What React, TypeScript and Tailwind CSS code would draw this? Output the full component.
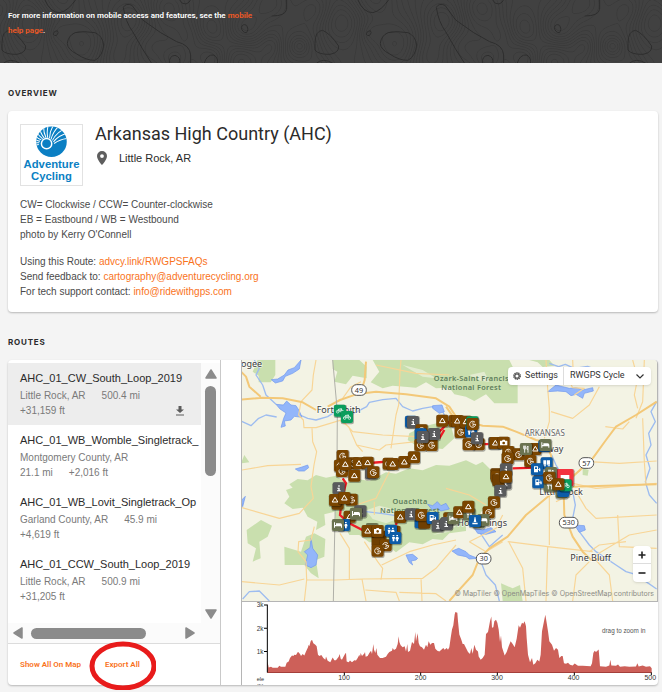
import React from 'react';

type MarkerKind =
  | 'warn' | 'turn' | 'info' | 'blue' | 'people' | 'pump' | 'book'
  | 'bed' | 'fork' | 'camera' | 'bike' | 'monument' | 'plain' | 'finish';

const FILL: Record<MarkerKind, string> = {
  warn: '#7a4500', turn: '#7a4500', camera: '#7a4500', plain: '#6f3f02',
  info: '#595a5c', blue: '#0c5ca8', people: '#0c5ca8', pump: '#0c5ca8',
  book: '#0c5ca8', monument: '#0c5ca8', bed: '#6b7350', fork: '#6b7350',
  bike: '#0a9d5c', finish: '#f4333f',
};

function Glyph({ kind }: { kind: MarkerKind }) {
  const line = { fill: 'none', stroke: '#fff', strokeWidth: 2.6 };
  switch (kind) {
    case 'warn':
      return <path d="M0-8 8.500 6H-8.500Z" {...line} strokeWidth={3} strokeLinejoin="round" />;
    case 'turn':
      return <path d="M7-5A9 9 0 1 0 9 1H1M1 1V6M-3-3H3" {...line} />;
    case 'info':
      return <path d="M-1-9H3V-5H-1ZM-4-2H3V6H6V9H-5V6H-1V1H-4Z" fill="#fff" />;
    case 'people':
      return <path d="M-8-9h5v4h-5zM3-9h5v4h-5zM-10-3h9l-1 6h-1v7h-5v-7h-1zM2-3h7l2 7h-3v6h-5v-6h-3z" fill="#fff" />;
    case 'pump':
      return <path d="M-9-9H3V9H-9ZM-6-6V-1H0V-6ZM5-6l5 4V6H6V2H3V0h4z" fill="#fff" fillRule="evenodd" />;
    case 'book':
      return <path d="M-10-9h9v13h-9zM1-9h9v13H1zM-9 6h7v3h-7zM3 6h7v3H3z" fill="#fff" />;
    case 'bed':
      return <path d="M-12-8h3v8h3v-5h13q5 1 5 5v8h-3V4H-9v4h-3z" fill="#fff" />;
    case 'fork':
      return <path d="M-7-10v8q0 3 3 3t3-3v-8M-4-10V11M6 11V-9q-4 2-3 10h3" {...line} />;
    case 'camera':
      return <path d="M-11-6h6l2-3h6l2 3h6V8h-22zM0-3a4 4 0 1 0 .1 0z" fill="#fff" fillRule="evenodd" />;
    case 'bike':
      return <path d="M-11 3a4 4 0 1 0 8 0a4 4 0 1 0-8 0M3 3a4 4 0 1 0 8 0a4 4 0 1 0-8 0M-7 3-4-5H4L0 3-4-5M3-8 7 3" {...line} strokeWidth={2} />;
    case 'monument':
      return <path d="M-1-12H1L4 3H-4ZM-8 5H8V10H-8Z" fill="#fff" />;
    case 'finish':
      return <path d="M-13-8H13V9H3V16H-2V9H-13Z" fill="#fff" />;
    default:
      return null;
  }
}

const MARKERS: [MarkerKind, number, number][] = [
  ['bike', 312, 167], ['bike', 333, 186],
  ['blue', 525, 200], ['info', 531, 201],
  ['turn', 557, 226], ['blue', 554, 238], ['blue', 563, 250], ['turn', 553, 270], ['turn', 587, 270],
  ['info', 594, 237], ['info', 560, 246],
  ['warn', 619, 197], ['warn', 656, 198], ['warn', 664, 198], ['turn', 674, 231], ['warn', 690, 200],
  ['people', 705, 229], ['bike', 709, 202], ['turn', 710, 207], ['turn', 728, 268], ['turn', 698, 268], ['info', 723, 250],
  ['info', 775, 264], ['warn', 778, 264], ['camera', 803, 263],
  ['turn', 817, 291], ['turn', 848, 298], ['warn', 898, 282], ['turn', 815, 310], ['fork', 870, 282],
  ['blue', 925, 273], ['bed', 928, 270], ['turn', 883, 318], ['book', 932, 325],
  ['plain', 781, 358], ['turn', 783, 365], ['info', 810, 343], ['info', 808, 385], ['plain', 787, 376], ['warn', 810, 365],
  ['info', 793, 407], ['turn', 774, 442], ['turn', 758, 472],
  ['finish', 987, 368], ['info', 912, 374], ['pump', 903, 343], ['pump', 907, 382], ['fork', 945, 354],
  ['bed', 977, 412], ['blue', 982, 408], ['bike', 989, 391], ['fork', 941, 392], ['turn', 940, 368], ['warn', 967, 388],
  ['turn', 320, 303], ['turn', 312, 332], ['turn', 318, 348], ['turn', 352, 325], ['warn', 328, 328],
  ['warn', 369, 325], ['warn', 395, 323], ['turn', 458, 326], ['warn', 470, 327], ['warn', 505, 321],
  ['warn', 534, 307], ['warn', 355, 362], ['info', 405, 355], ['turn', 412, 352],
  ['info', 308, 400], ['plain', 305, 446], ['warn', 297, 435], ['turn', 347, 434], ['warn', 325, 429],
  ['warn', 341, 485], ['info', 373, 469], ['bed', 360, 476], ['people', 324, 510], ['bed', 306, 510],
  ['bed', 408, 522], ['plain', 433, 545], ['plain', 425, 558], ['turn', 475, 530], ['people', 465, 527],
  ['warn', 395, 528], ['camera', 425, 528], ['turn', 449, 571], ['turn', 425, 587], ['people', 478, 549],
  ['blue', 554, 502], ['plain', 565, 503], ['warn', 493, 486], ['info', 525, 478], ['turn', 556, 480],
  ['pump', 590, 489], ['info', 605, 512], ['turn', 640, 490], ['info', 632, 504], ['info', 630, 507],
  ['bed', 652, 490], ['warn', 670, 472], ['fork', 700, 478], ['warn', 697, 455],
  ['bed', 728, 502], ['bed', 742, 495], ['monument', 717, 498],
];

function Shield({ x, y, label }: { x: number; y: number; label: string }) {
  const half = label.length > 2 ? 28 : 22;
  return (
    <g>
      <rect x={x - half} y={y - 16} width={half * 2} height={32} rx={15} fill="#fff" stroke="#555" strokeWidth={3} />
      <text x={x} y={y + 8} textAnchor="middle" fontSize={22} fill="#333">{label}</text>
    </g>
  );
}

function RouteMap() {
  return (
    <svg
      viewBox="15 15 1251 723"
      preserveAspectRatio="xMidYMid slice"
      className="block h-full w-full font-['Noto_Sans',sans-serif]"
      role="img"
      aria-label="Map of the Arkansas High Country route"
    >
      <rect x="0" y="0" width="1300" height="760" fill="#f3f3e4" />
      <g fill="#c9dfae">
        <path d="M65 15H118V60L104 82H68V62L50 50Z" />
        <path d="M290 15H370L392 35V70L350 62L330 88L295 80L304 50L290 42Z" />
        <path d="M410 15H820L845 65V145H775L750 118L715 138L690 125L655 118L640 98L600 100L570 82L540 98L470 92L440 100L404 82L430 50Z" />
        <path d="M880 15H940L955 32L920 36L905 22Z" />
        <path d="M520 235L560 215L640 195L655 250L620 282L545 275L515 255Z" />
        <path d="M150 405L170 398L160 388L185 372L215 376L240 360L270 368L300 362L330 384L365 372L400 378L450 352L480 356L520 340L560 346L600 330L640 332L690 316L720 330L740 320L765 345L785 350L780 380L790 410L770 430L760 460L735 470L730 492L690 510L690 528L640 535L620 555L590 552L560 568L520 562L480 592L440 560L400 562L370 540L340 540L320 500L298 492L296 470L265 478L268 510L240 525L244 500L215 485L200 458L170 462L145 445L160 425Z" />
        <path d="M15 325L25 300L40 322ZM32 525L75 495L108 512L95 545L70 560L74 610L50 620L60 580L35 565Z" />
        <path d="M145 575L195 590L210 545L235 535L268 552L265 605L240 615L248 670L225 655L205 630L146 630Z" />
        <path d="M795 685L830 700L852 690L860 738H800ZM1040 340L1058 345L1055 362L1040 360Z" />
      </g>
      <g fill="#e3ecd0">
        <path d="M390 466L430 452L470 462L490 490L450 505L410 492ZM590 540L640 520L620 500L670 505L640 530Z" />
        <path d="M500 30L560 45L600 70L560 65ZM700 60L745 50L760 80L735 78Z" />
      </g>
      <g fill="none" stroke="#9dbcf0" strokeWidth="4" strokeLinejoin="round">
        <path d="M15 198L45 212L68 190L90 180L122 186M192 180L215 190L240 195L275 185L306 165L330 158L352 176L392 155L400 142L440 134L480 130L500 155L530 168L560 160L590 155L618 165L632 195" />
        <path d="M55 15L70 40L60 60L80 90L90 120L120 148" />
        <path d="M1262 140L1245 170L1258 200L1238 235L1245 270L1230 300L1242 340L1228 380L1240 420L1262 445" />
        <path d="M940 25L968 35L988 28L1015 40L1055 34L1090 48L1130 42M947 300L960 330L990 380L1010 410L1018 450L1010 490L1030 530L1060 570L1080 590L1110 610L1140 630L1170 650L1205 660L1230 680L1262 702" />
        <path d="M730 530L760 575L800 540M735 620L750 660L778 690L790 738M20 732L40 710L70 708L100 738M390 470L440 476L480 482" />
      </g>
      <g fill="#93b6fa" stroke="#6e97ee" strokeWidth="2">
        <path d="M195 15L175 38L156 45L145 60L125 72L106 74L118 84L140 78L148 64L170 55L190 42Z" />
        <path d="M120 148L142 150L152 138L165 150L180 152L190 168L198 187L175 184L165 195L145 198L148 213L135 217L143 190L150 174L132 162Z" />
        <path d="M178 342L198 336L215 330L218 338L205 348L188 348Z" />
        <path d="M225 550L230 580L245 600L240 630L225 638L208 630L215 600L205 590L222 578Z" />
        <path d="M510 600L530 598L545 610L540 615L525 618L530 630L520 622Z" />
        <path d="M935 110L960 90L980 95L1000 100L1020 98L1040 105L1070 98L1072 108L1045 115L1040 130L1020 118L1005 122L990 110L965 108Z" />
        <path d="M648 588L668 580L690 590L700 600L725 610L700 612L690 605L665 600Z" />
        <path d="M575 448L590 452L604 440L615 452L630 445L640 462L615 468L600 460L590 466ZM715 520L740 525L765 518L780 530L750 538L725 535Z" />
        <path d="M1016 510L1045 512L1048 525L1030 532ZM15 437L28 424L20 455ZM590 152L618 150L625 170L610 175L590 160Z" />
      </g>
      <g fill="none" stroke="#f8d596" strokeWidth="3.5" strokeLinejoin="round">
        <path d="M240 15L232 60L228 105L195 140L188 180L202 195L204 218L240 218L312 196L338 215L362 270L380 290M316 192L350 230L440 240L540 245M362 270L430 285L450 270L540 260" />
        <path d="M18 345L95 332L195 328M228 220L230 260L242 290L234 330L225 395L232 430L190 475L130 490L18 458M495 15L492 50L488 150L480 180L465 280" />
        <path d="M375 80L345 95L320 130M420 30L540 55L640 60" />
        <path d="M235 515L225 555L188 560L186 590L210 620L212 675L205 738M212 675L300 675L378 672L560 670L600 640L660 570M205 672L130 690L18 680M312 535L340 580L340 672M385 560L425 620L440 640L435 675M378 672L390 738M388 705L480 712L490 738M555 670L558 738M490 712L600 716L630 738" />
        <path d="M437 630L520 590L590 570L660 555" />
        <path d="M930 15L935 100L940 160L940 200L925 250M1015 120L1045 100L1010 98L995 70L1012 60L1010 15M945 170L1010 190L1060 150L1090 95M1190 15L1205 70L1195 120L1205 160M1108 215L1160 222L1180 200" />
        <path d="M1225 15L1220 140L1200 190M1060 320L1150 325L1262 318M1035 345L980 380M1220 190L1225 320L1230 390" />
        <path d="M950 372L1080 400L1262 385M960 440L1020 410L1050 460L1080 490L1262 480M1145 480L1150 575L1262 580M815 560L935 575L1070 590M935 575L930 738M940 420L940 570M818 560L860 640L870 738" />
        <path d="M1060 620L1020 660L1010 738M1075 610L1120 660L1130 738M1080 600L1180 540L1262 525M1060 590L1090 570L1170 560M700 560L740 540L780 520L800 480M700 560L750 590L800 560" />
        <path d="M630 400L700 420L750 450M460 350L440 390L420 430L360 450M415 440L415 480" />
      </g>
      <g fill="none" stroke="#f3c878" strokeWidth="6" strokeLinejoin="round">
        <path d="M15 134L80 128L140 130L200 142L240 165M15 50L30 65L40 95L74 125M275 155L312 135L360 118L420 110L510 118L600 130L640 155L660 185" />
        <path d="M390 20L386 75L375 110M630 155L655 190L740 212L800 215L840 230L900 255L925 260L945 300L950 350L960 390" />
        <path d="M1262 140L1200 180L1140 215L1110 255L1070 310L1010 365L985 385L930 430L870 480L815 545L760 580L730 610L710 660L660 715L640 738" />
        <path d="M983 415L985 480L1010 545L1040 590L1066 615M1070 615L1100 610M1010 395L1262 388" />
      </g>
      <path d="M290 15L304 170L303 330M298 440L292 738" stroke="#b0b0a8" strokeWidth="3" fill="none" />
      <g fontSize="27" fill="#3a3a3a" stroke="#fff" strokeWidth="4" strokeOpacity=".7" paintOrder="stroke">
        <text x="15" y="36">ogee</text>
        <text x="242" y="174">Fort Smith</text>
        <text x="882" y="292">Conway</text>
        <text x="910" y="421">Little Rock</text>
        <text x="664" y="514">Hot Springs</text>
        <text x="1003" y="619">Pine Bluff</text>
        <text x="866" y="243" fontSize="24" fill="#666">ARKANSAS</text>
      </g>
      <g fontSize="22" fontWeight="600" letterSpacing="1" fill="#5d7d5b" textAnchor="middle">
        <text x="706" y="77">Ozark-Saint Francis</text>
        <text x="706" y="104">National Forest</text>
        <text x="522" y="447">Ouachita</text>
        <text x="522" y="473">National Forest</text>
      </g>
      <path d="M320 320L400 324L530 314M320 370L330 385L318 430L312 480L340 505L385 528M480 510L485 490M600 240L640 200M730 268L810 265M830 340L900 338M610 250L625 225" stroke="#ee1c25" strokeWidth="7" fill="none" />
      <Shield x={369} y={105} label="49" />
      <Shield x={1051} y={324} label="57" />
      <Shield x={998} y={503} label="530" />
      <Shield x={743} y={611} label="30" />
      {MARKERS.map(([kind, x, y], i) => {
        const half = kind === 'finish' ? 26 : 18;
        return (
          <g key={i} transform={`translate(${x} ${y})`}>
            <rect x={-half - 1} y={-half} width={half * 2 + 4} height={half * 2 + 4} rx={7} fill="#000" opacity=".3" />
            <rect x={-half} y={-half} width={half * 2} height={half * 2} rx={6} fill={FILL[kind]} />
            <Glyph kind={kind} />
          </g>
        );
      })}
    </svg>
  );
}

const PROFILE =
  '94,233 94,200 97,212 98,218 105,216 110,219 125,219 130,213 135,216 148,216 152,204 158,200 162,190 168,182 172,184 175,180 180,181 186,171 192,178 195,184 200,178 205,182 210,170 216,158 218,150 220,155 224,140 228,135 232,146 238,150 242,155 246,180 250,184 256,181 262,190 268,195 270,185 275,198 283,202 290,188 295,196 300,196 308,186 311,178 314,192 318,195 322,187 327,178 330,174 332,200 338,202 342,197 348,202 355,196 360,197 365,190 370,180 372,186 374,175 378,184 385,176 387,172 389,186 395,184 400,175 405,168 408,178 412,148 414,165 418,175 421,160 424,180 432,190 440,190 450,186 455,178 460,172 468,168 470,160 474,166 480,162 485,148 488,125 490,142 494,152 500,158 506,155 510,170 514,148 516,172 522,168 528,142 534,148 538,112 540,140 545,116 548,145 552,155 558,158 564,165 570,150 574,158 578,140 583,150 588,145 594,145 598,162 604,168 610,170 616,165 622,160 626,165 632,160 636,165 640,158 644,130 648,105 652,92 656,60 658,53 664,55 666,80 670,120 676,135 680,148 684,148 690,160 696,172 702,178 706,160 710,177 715,150 720,165 726,170 728,185 734,195 740,190 746,180 750,118 756,112 762,80 766,66 768,100 772,98 775,80 780,76 784,85 788,105 792,142 795,123 798,158 806,182 812,172 818,155 824,140 830,148 836,158 842,132 848,92 852,100 858,85 862,88 866,80 870,95 872,130 876,180 882,202 888,190 892,210 898,205 904,195 910,200 914,180 918,110 924,80 928,61 932,85 936,110 940,140 948,150 954,168 960,160 966,165 970,190 976,184 980,184 984,205 990,207 996,204 1002,210 1010,212 1016,206 1026,213 1040,213 1064,214 1068,205 1072,175 1076,168 1080,172 1084,168 1088,164 1092,214 1110,216 1120,212 1123,195 1126,212 1140,213 1146,209 1152,216 1166,214 1180,216 1200,215 1204,205 1208,215 1220,212 1230,216 1242,214 1247,220 1247,233';

function ElevationChart() {
  return (
    <svg
      viewBox="18 23 1248 247"
      preserveAspectRatio="none"
      className="block h-full w-full font-['Liberation_Sans',Arial,sans-serif]"
      role="img"
      aria-label="Elevation profile"
    >
      <polygon points={PROFILE} fill="#cd6059" />
      <path d="M94 233H1247" stroke="#a43f3a" strokeWidth="3" />
      <path d="M84 32H94V233M84 101H94M84 170H94M325 233V241M554 233V241M784 233V241M1015 233V241M1246 233V241" stroke="#000" strokeWidth="3" fill="none" />
      <g fontSize="19" fill="#333">
        <text x="62" y="39">3k</text>
        <text x="62" y="108">2k</text>
        <text x="62" y="177">1k</text>
        <text x="62" y="259" fontSize="17">ele</text>
        <text x="62" y="280" fontSize="17">(ft)</text>
      </g>
      <g fontSize="21" fill="#333" textAnchor="middle">
        <text x="324" y="255">100</text>
        <text x="554" y="255">200</text>
        <text x="783" y="255">300</text>
        <text x="1013" y="255">400</text>
        <text x="1243" y="255">500</text>
      </g>
      <text x="1098" y="114" fontSize="19" fill="#555">drag to zoom in</text>
    </svg>
  );
}

/* Contour lines of a small height field that repeats horizontally. */
const TILE = 313;
const PEAKS: [number, number, number, number][] = [
  [84, 45, 20, 1], [56, 33, 8, 0.4], [60, -4, 18, 0.9], [130, 22, 15, -0.8], [168, 8, 15, 0.9],
  [175, 60, 10, 0.7], [211, 58, 12, 0.8], [210, 30, 13, -0.6], [245, 28, 14, 0.9], [270, 2, 15, 0.9],
  [298, 47, 16, 1], [300, 46, 5, 0.3], [315, 10, 13, 0.7], [28, 20, 16, -0.7], [115, 55, 14, -0.6],
  [240, 60, 14, -0.7], [150, 45, 14, 0.5], [190, 35, 12, 0.6], [272, 46, 9, -0.5], [8, 70, 10, 0.5],
];

function buildContours() {
  const height = (x: number, y: number) => {
    let sum = 0;
    for (const [px, py, r, h] of PEAKS) {
      let dx = Math.abs(x - px);
      dx = Math.min(dx, TILE - dx);
      sum += h * Math.exp(-(dx * dx + (y - py) * (y - py)) / (2 * r * r));
    }
    return sum;
  };
  const step = 2;
  let d = '';
  for (let x = 0; x < TILE; x += step) {
    for (let y = 0; y < 64; y += step) {
      const c = [[x, y], [x + step, y], [x + step, y + step], [x, y + step]];
      const v = c.map(([a, b]) => height(a, b));
      for (let level = -0.85; level < 1.3; level += 0.13) {
        const hits: string[] = [];
        for (let k = 0; k < 4; k++) {
          const n = (k + 1) % 4;
          if (v[k] < level !== v[n] < level) {
            const t = (level - v[k]) / (v[n] - v[k]);
            hits.push(`${(c[k][0] + t * (c[n][0] - c[k][0])).toFixed(1)} ${(c[k][1] + t * (c[n][1] - c[k][1])).toFixed(1)}`);
          }
        }
        if (hits.length >= 2) d += `M${hits[0]}L${hits[1]}`;
      }
    }
  }
  return d;
}

const CONTOURS = buildContours();

function Topography() {
  return (
    <svg className="absolute inset-0 h-full w-full" aria-hidden="true">
      <defs>
        <pattern id="topo" width={TILE} height="64" patternUnits="userSpaceOnUse">
          <path d={CONTOURS} fill="none" stroke="#3a3a3a" strokeWidth="1" />
          <g transform="scale(.33333)" fill="none" stroke="#2c2c2c" strokeWidth="3">
            <path d="M202 130Q204 108 225 98Q250 92 285 98Q308 108 311 135Q308 168 285 181Q260 182 230 162Q202 148 202 130Z" />
            <path d="M160 102Q162 92 172 92Q178 98 170 106Q162 110 160 102Z" />
            <path d="M370 22Q378 8 396 16L428 60L482 98L530 125Q570 135 572 165V192M370 22Q376 65 398 95Q425 145 456 192" />
            <path d="M508 192Q506 168 525 166Q542 170 540 192M612 192Q620 162 642 165Q656 175 652 192" />
            <path d="M724 82Q728 70 740 76Q748 88 740 98Q726 98 724 82Z" />
            <path d="M860 -2V28Q856 48 815 48M134 -2Q150 38 180 38Q205 32 228 -2M538 -2Q545 14 558 12Q570 8 572 -2" />
            <path d="M945 130Q945 92 968 91Q990 100 1016 138Q1018 158 990 163Q955 164 945 150ZM6 130Q6 92 29 91Q51 100 77 138Q79 158 51 163Q16 164 6 150Z" />
            <path d="M10 190Q30 172 60 190" />
          </g>
        </pattern>
      </defs>
      <rect width="100%" height="100%" fill="url(#topo)" />
    </svg>
  );
}

function Logo() {
  const rays = Array.from({ length: 13 }, (_, i) => i * 13 - 172);
  return (
    <svg viewBox="0 0 62 61" className="h-[62px] w-[63px] shrink-0 border border-[#e2e2e2]" role="img" aria-label="Adventure Cycling">
      <clipPath id="globe"><circle cx="31" cy="17" r="15.500" /></clipPath>
      <circle cx="31" cy="17" r="15.500" fill="#0b7fc3" />
      <g clipPath="url(#globe)">
        {rays.map((a) => (
          <path key={a} d="M8 0Q18 -4 30 1" transform={`translate(26 21) rotate(${a})`} fill="none" stroke="#fff" strokeWidth="1" />
        ))}
      </g>
      <circle cx="26" cy="19" r="6" fill="#fff" />
      <circle cx="26" cy="19" r="4.500" fill="#0b7fc3" />
      <g fontSize="11.500" fontWeight="bold" fill="#0b7fc3" textAnchor="middle" className="font-['Liberation_Sans',Arial,sans-serif]">
        <text x="31" y="44">Adventure</text>
        <text x="31" y="56">Cycling</text>
      </g>
    </svg>
  );
}

const ROUTES = [
  { name: 'AHC_01_CW_South_Loop_2019', lines: [['Little Rock, AR', '500.4 mi'], ['+31,159 ft']], selected: true },
  { name: 'AHC_01_WB_Womble_Singletrack_', lines: [['Montgomery County, AR'], ['21.1 mi', '+2,016 ft']] },
  { name: 'AHC_01_WB_Lovit_Singletrack_Op', lines: [['Garland County, AR', '45.9 mi'], ['+4,619 ft']] },
  { name: 'AHC_01_CCW_South_Loop_2019', lines: [['Little Rock, AR', '500.9 mi'], ['+31,205 ft']] },
];

function Arrow({ className }: { className: string }) {
  return (
    <svg viewBox="0 0 12 10" className={`h-[10px] w-3 ${className}`} aria-hidden="true">
      <path d="M6 1 11 9H1Z" fill="#8b8b8b" stroke="#8b8b8b" strokeWidth="1.500" strokeLinejoin="round" />
    </svg>
  );
}

function RouteList() {
  return (
    <div className="flex w-[213px] shrink-0 flex-col border-r border-[#c9c9c9]">
      <div className="flex pt-[3px]">
        <ul className="h-[260px] min-w-0 flex-1 overflow-hidden">
          {ROUTES.map((r) => (
            <li key={r.name} className={`relative h-[62px] overflow-hidden pt-[7px] pl-3 whitespace-nowrap ${r.selected ? 'bg-[#ededed]' : ''}`}>
              <h3 className="text-[11px] leading-[17px] text-[#2b2b2b]">{r.name}</h3>
              <div className="pt-px">
                {r.lines.map((line) => (
                  <p key={line[0]} className="flex gap-4 text-[10px] leading-[15px] text-[#7a7a7a]">
                    {line.map((part) => <span key={part}>{part}</span>)}
                  </p>
                ))}
              </div>
              {r.selected && (
                <button type="button" aria-label="Download" className="absolute right-4 bottom-[9px]">
                  <svg viewBox="0 0 10 11" className="h-[11px] w-[10px]">
                    <path d="M3.500 1h3v3.500H9L5 8 1 4.500h2.500zM1 9.500h8v1H1z" fill="#5c5c5c" />
                  </svg>
                </button>
              )}
            </li>
          ))}
        </ul>
        <div className="flex w-[19px] flex-col items-center bg-[#fbfbfb] pt-[6px] pb-1" aria-hidden="true">
          <Arrow className="" />
          <div className="mt-[7px] h-[90px] w-[11px] rounded-full bg-[#8b8b8b]" />
          <Arrow className="mt-auto rotate-180" />
        </div>
      </div>
      <div className="flex h-5 items-center bg-[#fbfbfb] pr-6 pl-1" aria-hidden="true">
        <Arrow className="-rotate-90" />
        <div className="ml-[7px] h-[11px] w-[115px] rounded-full bg-[#8b8b8b]" />
        <Arrow className="ml-auto rotate-90" />
      </div>
      <div className="flex h-[42px] items-center gap-6 border-t border-[#dcdcdc] pl-3 font-['Roboto',sans-serif] text-[8px] font-semibold text-[#f9731c]">
        <button type="button">Show All On Map</button>
        <button type="button" className="relative">
          Export All
          <svg viewBox="0 0 68 50" className="pointer-events-none absolute top-1/2 left-1/2 h-[50px] w-[68px] -translate-x-1/2 -translate-y-1/2" aria-hidden="true">
            <ellipse cx="35" cy="26" rx="31" ry="22" fill="none" stroke="#e81b1b" strokeWidth="5" />
          </svg>
        </button>
      </div>
    </div>
  );
}

export default function App() {
  return (
    <div className="min-h-screen bg-[#f4f4f4] font-['Liberation_Sans',Arial,sans-serif] text-[#2b2b2b]">
      <header className="relative bg-[#414141] px-2 pt-2 pb-[25px]">
        <Topography />
        <p className="relative max-w-[264px] font-['Roboto',sans-serif] text-[8px] leading-[15px] font-semibold text-white">
          For more information on mobile access and features, see the{' '}
          <a href="#help" className="text-[#f15a24]">mobile<br />help page</a>.
        </p>
      </header>

      <main className="pr-1 pb-[5px] pl-2">
        <h2 className="pt-6 pb-3 font-['Inter',sans-serif] text-[8px] leading-3 font-bold tracking-widest">OVERVIEW</h2>
        <section className="rounded bg-white px-3 py-[13px] shadow-[0_1px_2px_rgba(0,0,0,0.25)]">
          <div className="flex gap-3">
            <Logo />
            <div>
              <h1 className="font-['Roboto',sans-serif] text-[18px] leading-5">Arkansas High Country (AHC)</h1>
              <p className="mt-1 flex items-center gap-3 pl-[2px] text-[11px] leading-5">
                <svg viewBox="0 0 10 14" className="h-[14px] w-[10px]" aria-hidden="true">
                  <path d="M5 0a5 5 0 0 1 5 5c0 4-5 9-5 9S0 9 0 5a5 5 0 0 1 5-5zM5 3.200a1.900 1.900 0 1 0 0 3.800 1.900 1.900 0 0 0 0-3.800z" fill="#5e5e5e" fillRule="evenodd" />
                </svg>
                Little Rock, AR
              </p>
            </div>
          </div>
          <div className="mt-[11px] text-[10px] leading-[15px] text-[#4a4a4a]">
            <p>CW= Clockwise / CCW= Counter-clockwise</p>
            <p>EB = Eastbound / WB = Westbound</p>
            <p>photo by Kerry O'Connell</p>
            <p className="mt-3">Using this Route: <a href="#faq" className="text-[#f9731c]">advcy.link/RWGPSFAQs</a></p>
            <p>Send feedback to: <a href="#feedback" className="text-[#f9731c]">cartography@adventurecycling.org</a></p>
            <p>For tech support contact: <a href="#support" className="text-[#f9731c]">info@ridewithgps.com</a></p>
          </div>
        </section>

        <h2 className="pt-6 pb-3 font-['Inter',sans-serif] text-[8px] leading-3 font-bold tracking-widest">ROUTES</h2>
        <section className="flex rounded bg-white shadow-[0_1px_2px_rgba(0,0,0,0.25)]">
          <RouteList />
          <div className="ml-5 flex min-w-0 flex-1 flex-col border-l border-[#b5b5b5]">
            <div className="relative h-[242px] overflow-hidden rounded-tr border-r border-b border-[#b5b5b5]">
              <RouteMap />
              <div className="absolute top-[7px] right-[6px] flex h-[18px] items-center rounded-sm bg-white font-['Roboto',sans-serif] text-[9px] text-[#333] shadow">
                <button type="button" className="flex h-full w-14 items-center justify-center gap-1 border-r border-[#ddd]">
                  <svg viewBox="0 0 8 8" className="h-2 w-2" aria-hidden="true">
                    <circle cx="4" cy="4" r="3.200" fill="none" stroke="#555" strokeWidth="1.500" strokeDasharray="1.300 .7" />
                    <circle cx="4" cy="4" r="2.200" fill="none" stroke="#555" strokeWidth="1.300" />
                  </svg>
                  Settings
                </button>
                <div className="relative flex items-center">
                  <select aria-label="Map style" className="w-[87px] appearance-none bg-transparent pl-[6px] text-[9px]">
                    <option>RWGPS Cycle</option>
                  </select>
                  <svg viewBox="0 0 8 5" className="pointer-events-none absolute right-[7px] h-[5px] w-2" aria-hidden="true">
                    <path d="M.5.5 4 4 7.500.5" fill="none" stroke="#333" strokeWidth="1.200" />
                  </svg>
                </div>
              </div>
              <div className="absolute right-[6px] bottom-[19px] flex w-[18px] flex-col rounded-sm bg-white shadow">
                <button type="button" aria-label="Zoom in" className="flex h-[18px] items-center justify-center border-b border-[#ddd]">
                  <svg viewBox="0 0 8 8" className="h-2 w-2"><path d="M4 .5V7.500M.5 4H7.500" stroke="#222" strokeWidth="1.600" /></svg>
                </button>
                <button type="button" aria-label="Zoom out" className="flex h-[18px] items-center justify-center">
                  <svg viewBox="0 0 8 8" className="h-2 w-2"><path d="M.5 4H7.500" stroke="#222" strokeWidth="1.600" /></svg>
                </button>
              </div>
              <p className="absolute right-[3px] bottom-[2px] font-['Inter',sans-serif] text-[7px] leading-[10px] whitespace-nowrap text-[#8c8c85]">
                © MapTiler © OpenMapTiles © OpenStreetMap contributors
              </p>
            </div>
            <div className="h-[83px]">
              <ElevationChart />
            </div>
          </div>
        </section>
      </main>
    </div>
  );
}
